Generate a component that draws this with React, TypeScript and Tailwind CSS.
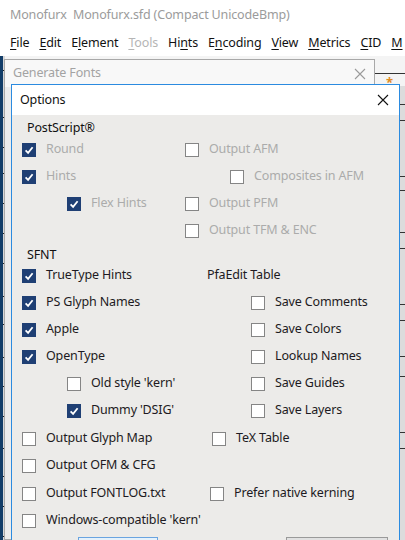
const font = { fontFamily: '"Noto Sans", "Open Sans", sans-serif' };

function Box({ checked }: { checked?: boolean }) {
  if (checked) {
    return (
      <span className="flex h-[14px] w-[14px] shrink-0 items-center justify-center bg-[#1f3f74]">
        <svg viewBox="0 0 14 14" className="h-[14px] w-[14px]">
          <path d="M3.6 7.3 L6.1 9.8 L10.6 4.3" stroke="#ffffff" strokeWidth="1.8" fill="none" />
        </svg>
      </span>
    );
  }
  return <span className="h-[14px] w-[14px] shrink-0 border-[1.5px] border-[#858585] bg-white" />;
}

function Opt({ label, checked, off, w }: { label: string; checked?: boolean; off?: boolean; w?: string }) {
  return (
    <div className={`flex items-center gap-[10px] ${w ?? ''}`}>
      <Box checked={checked} />
      <span className={off ? 'text-[#ababab]' : 'text-[#1d1a22]'}>{label}</span>
    </div>
  );
}

function Row({ children }: { children: React.ReactNode }) {
  return <div className="flex h-[27px] items-center">{children}</div>;
}

const menus: [string, string, string, boolean?][] = [
  ['', 'F', 'ile'],
  ['', 'E', 'dit'],
  ['E', 'l', 'ement'],
  ['', 'T', 'ools', true],
  ['Hi', 'n', 'ts'],
  ['E', 'n', 'coding'],
  ['', 'V', 'iew'],
  ['', 'M', 'etrics'],
  ['', 'C', 'ID'],
  ['', 'M', ''],
];

export default function App() {
  return (
    <div
      className="relative h-[540px] w-[405px] overflow-hidden bg-white text-[12.5px] tracking-[-0.15px]"
      style={font}
    >
      <div className="flex h-[31px] items-center pl-[10px] text-[#9b9b9b]">
        Monofurx&nbsp;&nbsp;Monofurx.sfd (Compact UnicodeBmp)
      </div>
      <div className="flex h-[25px] items-center gap-[10px] whitespace-nowrap pl-[10px] text-[#111]">
        {menus.map(([a, u, b, dis], i) => (
          <span key={i} className={dis ? 'text-[#b5b5b5]' : ''}>
            {a}
            <span className="underline underline-offset-[2px]">{u}</span>
            {b}
          </span>
        ))}
      </div>

      {/* main window behind */}
      <div className="absolute left-0 top-[56px] h-[484px] w-[405px] bg-[#f4f4f4]">
        <div className="absolute left-0 top-0 h-full w-[3px] bg-[#123d68]" />
        <div className="absolute left-[3px] top-0 h-full w-[2px] bg-[#d8d8d8]" />
        {[14, 61, 91, 117, 147, 177, 207, 240, 268, 301, 330, 360, 392, 420, 450, 480].map((y) => (
          <div key={y} className="absolute left-[3px] h-[1px] w-[3px] bg-[#222]" style={{ top: y }} />
        ))}
        <div className="absolute left-[374px] top-[17px] h-[1px] w-[31px] bg-[#333]" />
        <div className="absolute left-[386px] top-[20px] text-[13px] font-bold leading-none text-[#e08a1f]">*</div>
        <div className="absolute left-[400px] top-[30px] h-full w-[5px] bg-[#dcdcdc]" />
        {[48, 64, 120, 134, 176, 192, 248, 264, 300, 320, 376, 392].map((y) => (
          <div key={y} className="absolute left-[400px] h-[1px] w-[5px] bg-[#333]" style={{ top: y }} />
        ))}
      </div>

      {/* Generate Fonts dialog */}
      <div className="absolute left-[4px] top-[59px] h-[481px] w-[371px] border border-[#a8a8a8] bg-[#ececec]">
        <div className="flex h-[27px] items-center justify-between bg-[#f8f8f8] pl-[8px] pr-[8px] text-[#a3a3a3]">
          <span>Generate Fonts</span>
          <svg viewBox="0 0 12 12" className="h-[12px] w-[12px]">
            <path d="M1 1 L11 11 M11 1 L1 11" stroke="#9a9a9a" strokeWidth="1.1" />
          </svg>
        </div>
      </div>

      {/* Options dialog */}
      <div className="absolute left-[11px] top-[84px] flex h-[470px] w-[389px] flex-col border border-[#2b8be0] bg-[#ecebe9]">
        <div className="flex h-[30px] shrink-0 items-center justify-between bg-white pl-[8px] pr-[10px] text-[#111]">
          <span>Options</span>
          <svg viewBox="0 0 12 12" className="h-[12px] w-[12px]">
            <path d="M1 1 L11 11 M11 1 L1 11" stroke="#111" strokeWidth="1.1" />
          </svg>
        </div>
        <div className="flex flex-col pl-[10px]">
          <div className="mt-[5px] flex h-[16px] items-center pl-[5px] text-[#111]">PostScript®</div>
          <Row>
            <Opt checked off label="Round" w="w-[163px]" />
            <Opt off label="Output AFM" />
          </Row>
          <Row>
            <Opt checked off label="Hints" w="w-[208px]" />
            <Opt off label="Composites in AFM" />
          </Row>
          <Row>
            <div className="w-[45px]" />
            <Opt checked off label="Flex Hints" w="w-[118px]" />
            <Opt off label="Output PFM" />
          </Row>
          <Row>
            <div className="w-[163px]" />
            <Opt off label="Output TFM & ENC" />
          </Row>
          <div className="mt-[4px] flex h-[14px] items-center pl-[5px] text-[#111]">SFNT</div>
          <Row>
            <Opt checked label="TrueType Hints" w="w-[185px]" />
            <span className="text-[#1d1a22]">PfaEdit Table</span>
          </Row>
          <Row>
            <Opt checked label="PS Glyph Names" w="w-[229px]" />
            <Opt label="Save Comments" />
          </Row>
          <Row>
            <Opt checked label="Apple" w="w-[229px]" />
            <Opt label="Save Colors" />
          </Row>
          <Row>
            <Opt checked label="OpenType" w="w-[229px]" />
            <Opt label="Lookup Names" />
          </Row>
          <Row>
            <div className="w-[45px]" />
            <Opt label="Old style 'kern'" w="w-[184px]" />
            <Opt label="Save Guides" />
          </Row>
          <Row>
            <div className="w-[45px]" />
            <Opt checked label="Dummy 'DSIG'" w="w-[184px]" />
            <Opt label="Save Layers" />
          </Row>
          <div className="mt-[1px]">
            <Row>
              <Opt label="Output Glyph Map" w="w-[190px]" />
              <Opt label="TeX Table" />
            </Row>
            <Row>
              <Opt label="Output OFM & CFG" />
            </Row>
          </div>
          <div className="mt-[1px]">
            <Row>
              <Opt label="Output FONTLOG.txt" w="w-[188px]" />
              <Opt label="Prefer native kerning" />
            </Row>
            <Row>
              <Opt label="Windows-compatible 'kern'" />
            </Row>
          </div>
          <div className="mt-[3px] flex h-[24px]">
            <div className="ml-[56px] h-[24px] w-[80px] border border-[#6aa4e0] bg-[#e5f1fb]" />
            <div className="ml-[128px] h-[24px] w-[102px] border border-[#9a9a9a] bg-[#e1e1e1]" />
          </div>
        </div>
      </div>
    </div>
  );
}
